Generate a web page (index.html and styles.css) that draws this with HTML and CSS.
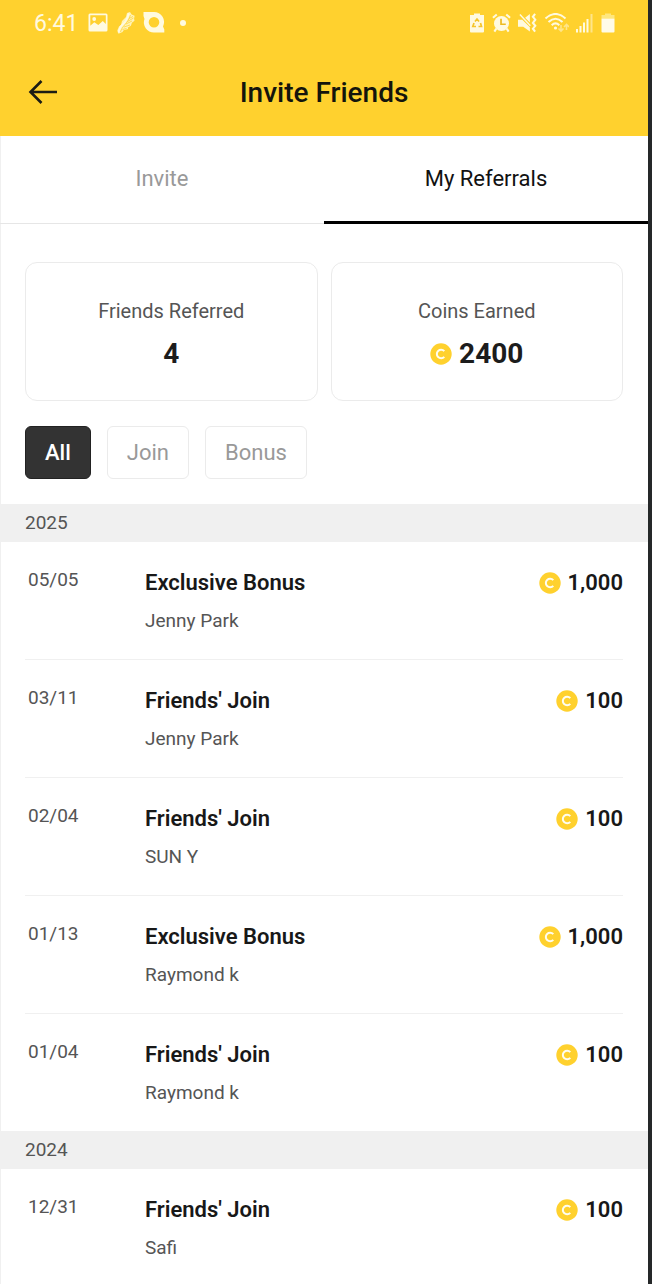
FILE: index.html
```html
<!DOCTYPE html>
<html lang="en">
<head>
<meta charset="utf-8">
<meta name="viewport" content="width=device-width, initial-scale=1">
<title>Invite Friends</title>
<link rel="stylesheet" href="styles.css">
</head>
<body>
<svg class="sprite" aria-hidden="true">
  <symbol id="coin" viewBox="0 0 22 22">
    <circle cx="11" cy="11" r="10.7" fill="#ffd12e"/>
    <path d="M14.3 8.1A4.3 4.3 0 1 0 14.3 13.9" fill="none" stroke="#fffdf0" stroke-width="2"/>
  </symbol>
</svg>
<div class="app">
  <header class="header">
    <div class="status">
      <div class="status-group">
        <span class="clock">6:41</span>
        <svg class="icon-notice" viewBox="0 0 22 22" aria-hidden="true"><path fill="#fffae0" fill-rule="evenodd" d="M3 1.500h16A1.500 1.500 0 0 1 20.500 3v15a1.500 1.500 0 0 1-1.500 1.500H3A1.500 1.500 0 0 1 1.500 18V3A1.500 1.500 0 0 1 3 1.500zM3.300 3.300v10.500l4-3.500 4 2.700 4.500-4 3 3V3.300z"/><circle cx="7.200" cy="7" r="1.900" fill="#fffae0"/></svg>
        <svg class="icon-notice" viewBox="0 0 22 22" aria-hidden="true"><path fill="#fff3b8" d="M12 1l3-1 1.600 2.500 3 1.300-.5 3 .4 2-2.600 2-1 3-3 1.600.2 1.600-4.500 1.200L7.500 20l-4 1.800-1.200-3.300 1.700-4 2-1.500 1-4 4-4z"/><path fill="none" stroke="#fffae0" stroke-width="1.800" d="M3.500 20.500c1.500-4 1-6 5-9 4-3 3.500-6 5.500-10"/><path fill="none" stroke="#ffd12e" stroke-width=".7" d="M5.500 20c1.500-6 7-8 10-17M11 12l6-3M12.500 9.500l6-3.500M14 6.500l4-2M9 15l6-2M7.500 17.500l4-1"/></svg>
        <svg class="icon-notice" viewBox="0 0 22 22" aria-hidden="true"><path fill="#fffae0" fill-rule="evenodd" d="M.500 0H11a10 10 0 0 1 9 14.500l1.300 3V20.500H11A10 10 0 0 1 1.500 7L.5 4zM11 5a5.300 5.300 0 1 0 0 10.600A5.300 5.300 0 0 0 11 5z"/></svg>
        <span class="dot"></span>
      </div>
      <div class="status-group status-system">
        <svg class="icon-battery" viewBox="0 0 15 20" aria-hidden="true"><path fill="#fffae0" d="M4 .5h6V2h4v16.500a1 1 0 0 1-1 1H1a1 1 0 0 1-1-1V2h4z"/><path fill="none" stroke="#f5c52b" stroke-width="1.700" d="M5 8.500L7 6l2 2.500M10.500 10l1 3.500H8.500M6 13.500H2.800L4 10"/></svg>
        <svg class="icon-system" viewBox="0 0 20 20" aria-hidden="true"><circle cx="10" cy="10.500" r="7.900" fill="#fffae0"/><path fill="none" stroke="#fffae0" stroke-width="2.200" d="M1 4.500L5 1M15 1l4 3.500M4.500 16l-2 3M15.500 16l2 3"/><path fill="none" stroke="#eebb20" stroke-width="1.800" d="M9.500 5.500v5.800h5"/></svg>
        <svg class="icon-system" viewBox="0 0 20 20" aria-hidden="true"><path fill="#fffae0" d="M0 6.500h4.500L12.500 14.500V19L5.500 14H0zM7.500 4.500L12.500.5v9z"/><path fill="none" stroke="#fffae0" stroke-width="1.500" d="M2 1l11 12"/><path fill="none" stroke="#fffae0" stroke-width="2.200" d="M18 .5l-2.300 3 2.500 3-2.500 3.500 2.500 3-2.500 3 2.300 3"/></svg>
        <svg class="icon-wifi" viewBox="0 0 25 20" aria-hidden="true"><g fill="none" stroke="#fffae0" stroke-width="2.100"><path d="M1.500 5.500q10-9 20 0M4.500 9q7-6.500 14 0M7.700 12.200q3.800-3.500 7.600 0"/></g><circle cx="11.500" cy="15" r="1.600" fill="#fffae0"/><path fill="none" stroke="#ffe58a" stroke-width="1.600" d="M17 12v6M14.500 15.500l2.500 2.600 2.500-2.600M22.500 17v-6M20 14l2.500-2.600L25 14"/></svg>
        <svg class="icon-signal" viewBox="0 0 17 20" aria-hidden="true"><g stroke="#fffae0" stroke-width="2"><path d="M1 16v3.500M4.500 13v6.500M8 9.500v10M11.500 6v13.500"/><path stroke="#ffe58a" d="M15.500 1v18.500"/></g></svg>
        <svg class="icon-battery" viewBox="0 0 15 20" aria-hidden="true"><path fill="#ffe77e" d="M5 .5h6V2h3.500v3.500h-13V2H5z"/><path fill="#fffbe8" d="M1.500 5.500h13v13a1 1 0 0 1-1 1h-11a1 1 0 0 1-1-1z"/></svg>
      </div>
    </div>
    <div class="titlebar">
      <button class="back" type="button" aria-label="Back">
        <svg class="icon-back" viewBox="0 0 30 24" aria-hidden="true"><path fill="none" stroke="#1c1c14" stroke-width="2.600" d="M13.500 1L2.500 12l11 11M2.500 12H29"/></svg>
      </button>
      <h1 class="title">Invite Friends</h1>
    </div>
  </header>
  <nav class="tabs">
    <button class="tab" type="button">Invite</button>
    <button class="tab tab-active" type="button" aria-current="page">My Referrals</button>
  </nav>
  <main>
    <section class="cards">
      <div class="card">
        <span class="card-label">Friends Referred</span>
        <strong class="card-value">4</strong>
      </div>
      <div class="card">
        <span class="card-label">Coins Earned</span>
        <strong class="card-value"><svg class="coin" aria-hidden="true"><use href="#coin"/></svg>2400</strong>
      </div>
    </section>
    <div class="filters">
      <button class="filter filter-active" type="button" aria-pressed="true">All</button>
      <button class="filter" type="button" aria-pressed="false">Join</button>
      <button class="filter" type="button" aria-pressed="false">Bonus</button>
    </div>
    <h2 class="year">2025</h2>
    <ul class="list">
      <li class="row"><span class="date">05/05</span><div class="detail"><strong class="kind">Exclusive Bonus</strong><span class="name">Jenny Park</span></div><span class="amount"><svg class="coin" aria-hidden="true"><use href="#coin"/></svg>1,000</span></li>
      <li class="row"><span class="date">03/11</span><div class="detail"><strong class="kind">Friends' Join</strong><span class="name">Jenny Park</span></div><span class="amount"><svg class="coin" aria-hidden="true"><use href="#coin"/></svg>100</span></li>
      <li class="row"><span class="date">02/04</span><div class="detail"><strong class="kind">Friends' Join</strong><span class="name">SUN Y</span></div><span class="amount"><svg class="coin" aria-hidden="true"><use href="#coin"/></svg>100</span></li>
      <li class="row"><span class="date">01/13</span><div class="detail"><strong class="kind">Exclusive Bonus</strong><span class="name">Raymond k</span></div><span class="amount"><svg class="coin" aria-hidden="true"><use href="#coin"/></svg>1,000</span></li>
      <li class="row"><span class="date">01/04</span><div class="detail"><strong class="kind">Friends' Join</strong><span class="name">Raymond k</span></div><span class="amount"><svg class="coin" aria-hidden="true"><use href="#coin"/></svg>100</span></li>
    </ul>
    <h2 class="year">2024</h2>
    <ul class="list">
      <li class="row"><span class="date">12/31</span><div class="detail"><strong class="kind">Friends' Join</strong><span class="name">Safi</span></div><span class="amount"><svg class="coin" aria-hidden="true"><use href="#coin"/></svg>100</span></li>
    </ul>
  </main>
</div>
</body>
</html>
```
FILE: styles.css
```css
* {
  box-sizing: border-box;
}

body {
  margin: 0;
  background: #fff;
  color: #181818;
  font-family: Roboto, "Liberation Sans", sans-serif;
}

button {
  margin: 0;
  padding: 0;
  border: 0;
  background: none;
  color: inherit;
  font: inherit;
}

svg {
  display: block;
  flex: none;
}

.sprite {
  position: absolute;
  width: 0;
  height: 0;
}

.app {
  height: 100vh;
  overflow: hidden;
  border-right: 4px solid #252829;
  box-shadow: inset 1px 0 #f0f0f0;
}

.header {
  background: #ffd12e;
}

.status {
  display: flex;
  justify-content: space-between;
  align-items: center;
  height: 46px;
  padding: 0 33px 0 34px;
}

.status-group {
  display: flex;
  align-items: center;
  gap: 6px;
}

.clock {
  margin-right: 3px;
  color: #fffae0;
  font-size: 23px;
}

.icon-notice {
  width: 22px;
  height: 22px;
}

.dot {
  width: 6px;
  height: 6px;
  margin-left: 9px;
  border-radius: 50%;
  background: #fffae0;
}

.status-system {
  gap: 7px;
}

.icon-battery {
  width: 15px;
  height: 20px;
}

.icon-system {
  width: 19px;
  height: 20px;
}

.icon-wifi {
  width: 25px;
  height: 20px;
}

.icon-signal {
  width: 17px;
  height: 20px;
}

.titlebar {
  display: grid;
  grid-template-columns: 58px 1fr 58px;
  align-items: center;
  height: 90px;
  padding-top: 2px;
}

.back {
  justify-self: end;
}

.icon-back {
  width: 30px;
  height: 24px;
}

.title {
  margin: 0;
  color: #14140c;
  font-size: 28px;
  font-weight: 500;
  text-align: center;
}

.tabs {
  display: flex;
  height: 88px;
}

.tab {
  flex: 1;
  padding-bottom: 3px;
  box-shadow: inset 0 -1px #e6e6e6;
  color: #999;
  font-size: 22px;
}

.tab-active {
  box-shadow: inset 0 -3px #000;
  color: #111;
}

.cards {
  display: flex;
  gap: 13px;
  padding: 38px 25px 25px;
}

.card {
  display: flex;
  flex: 1;
  flex-direction: column;
  align-items: center;
  gap: 10px;
  padding: 35px 16px 26px;
  border: 1px solid #ebebeb;
  border-radius: 12px;
}

.card-label {
  color: #555;
  font-size: 20px;
  line-height: 26px;
}

.card-value {
  display: flex;
  align-items: center;
  gap: 7px;
  color: #1c1c1c;
  font-size: 28px;
  font-weight: 700;
  line-height: 40px;
}

.coin {
  width: 22px;
  height: 22px;
}

.filters {
  display: flex;
  gap: 16px;
  padding: 0 25px 25px;
}

.filter {
  height: 53px;
  padding: 0 19px;
  border: 1px solid #ebebeb;
  border-radius: 6px;
  color: #999;
  font-size: 22px;
}

.filter-active {
  border-color: #222;
  background: #333;
  color: #fff;
  font-weight: 500;
}

.year {
  margin: 0;
  padding: 0 25px;
  background: #f0f0f0;
  color: #555;
  font-size: 19px;
  font-weight: 400;
  line-height: 38px;
}

.list {
  margin: 0;
  padding: 0 25px;
  list-style: none;
}

.row {
  display: grid;
  grid-template-columns: 117px 1fr auto;
  align-items: start;
  padding: 25px 0 24px;
  border-bottom: 1px solid #f0f0f0;
}

.row:last-child {
  border-bottom: 0;
}

.date {
  padding-left: 3px;
  color: #555;
  font-size: 19px;
  line-height: 26px;
}

.detail {
  display: flex;
  flex-direction: column;
  gap: 8px;
  padding: 0 3px;
}

.kind {
  font-size: 22px;
  font-weight: 600;
  line-height: 32px;
}

.name {
  color: #555;
  font-size: 19px;
  line-height: 28px;
}

.amount {
  display: flex;
  align-items: center;
  gap: 7px;
  font-size: 22px;
  font-weight: 600;
  line-height: 32px;
}
```
